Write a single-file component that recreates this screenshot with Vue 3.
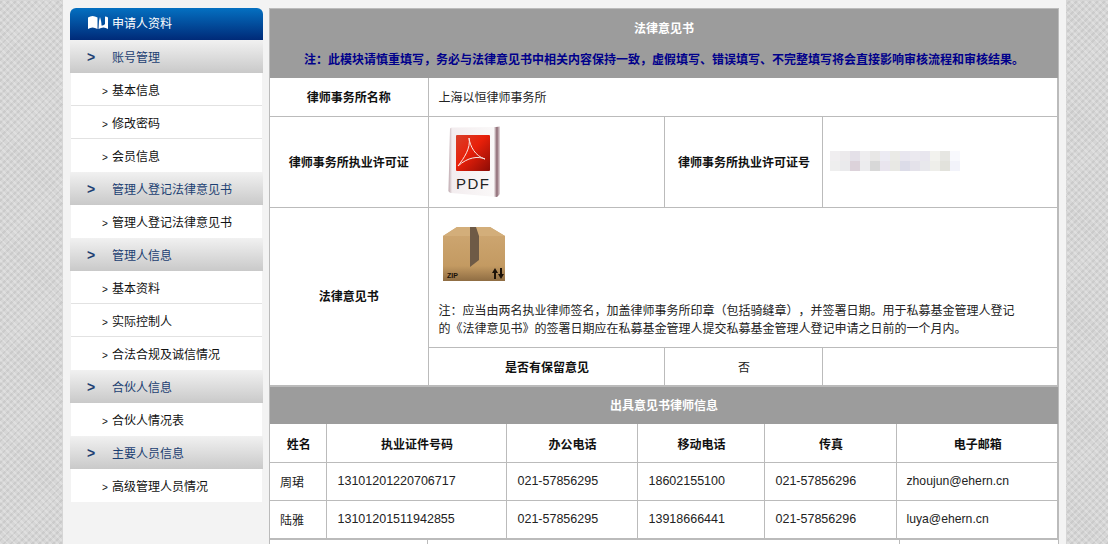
<template>
  <div class="page">
    <div class="wrap">
      <aside class="side">
        <div class="side-head">
          <svg class="book" width="20" height="13" viewBox="0 0 20 13">
            <path d="M0 1.500 C3 -0.500 6 -0.500 9.500 1.500 V13 C6 11 3 11 0 13 Z" fill="#fff" />
            <path d="M11 5 L12 1 C13 4 13.500 7 13.500 9.500 C15 9.500 16 9 17 8 L17 0.500 C18 0.500 19 1 20 1.500 V13 C17 11 14 11 10.500 13 Z" fill="#fff" />
          </svg>
          <span>申请人资料</span>
        </div>
        <template v-for="group in menu" :key="group.title">
          <div class="side-group"><b>&gt;</b><span>{{ group.title }}</span></div>
          <ul class="side-list">
            <li v-for="item in group.items" :key="item"><small>&gt;</small>{{ item }}</li>
          </ul>
        </template>
      </aside>

      <main class="main">
        <div class="head-box">
          <div class="head-title">法律意见书</div>
          <div class="head-note">注：此模块请慎重填写，务必与法律意见书中相关内容保持一致，虚假填写、错误填写、不完整填写将会直接影响审核流程和审核结果。</div>
        </div>
        <table class="info">
          <colgroup>
            <col style="width: 158px" />
            <col style="width: 236px" />
            <col style="width: 158px" />
            <col />
          </colgroup>
          <tbody>
            <tr class="r38">
              <th>律师事务所名称</th>
              <td colspan="3" class="pad">上海以恒律师事务所</td>
            </tr>
            <tr class="r91">
              <th>律师事务所执业许可证</th>
              <td class="pdf-cell">
                <svg width="54" height="72" viewBox="0 0 54 72">
                  <defs>
                    <linearGradient id="pdfRed" x1="0" y1="0" x2="1" y2="1">
                      <stop offset="0" stop-color="#d8402a" />
                      <stop offset="0.45" stop-color="#e8200a" />
                      <stop offset="1" stop-color="#8c0c06" />
                    </linearGradient>
                    <linearGradient id="pdfPage" x1="0" y1="0" x2="1" y2="0">
                      <stop offset="0" stop-color="#b9a3a9" />
                      <stop offset="0.07" stop-color="#f3edef" />
                      <stop offset="0.88" stop-color="#faf8f8" />
                      <stop offset="0.94" stop-color="#8a6670" />
                      <stop offset="1" stop-color="#e8dcdf" />
                    </linearGradient>
                  </defs>
                  <path d="M2 3 Q2 1.500 4 1.500 L48 1 L52 0.500 V68 L49 71 L3 67 Q0 66 0.500 64 Z" fill="url(#pdfPage)" />
                  <rect x="8" y="9" width="34" height="36" rx="1" fill="url(#pdfRed)" />
                  <path d="M21 12 C22 20 27 30 37 33 C30 30 20 31 10 40 C16 32 23 22 21 12 Z" fill="none" stroke="#f8e8e4" stroke-width="1" />
                  <text x="8" y="63" class="pdf-text">PDF</text>
                </svg>
              </td>
              <th class="shift">律师事务所执业许可证号</th>
              <td class="pad">
                <div class="blur">
                  <i v-for="(c, i) in blurCells" :key="i" :style="{ background: c }"></i>
                </div>
              </td>
            </tr>
            <tr class="r140">
              <th rowspan="2" class="lift">法律意见书</th>
              <td colspan="3" class="note-cell">
                <svg class="zip" width="64" height="55" viewBox="0 0 64 55">
                  <defs>
                    <linearGradient id="boxBody" x1="0" y1="0" x2="0" y2="1">
                      <stop offset="0" stop-color="#cfa873" />
                      <stop offset="0.72" stop-color="#c39a62" />
                      <stop offset="1" stop-color="#8f6d43" />
                    </linearGradient>
                  </defs>
                  <path d="M0 9 L14 0 H47 L62 9 V54 H0 Z" fill="url(#boxBody)" />
                  <path d="M0 9 L14 0 H47 L62 9 Z" fill="#d3ae7a" />
                  <path d="M27 0 H33 L36 9 V33 L27 40 Z" fill="#6e5a46" />
                  <text x="4" y="51" class="zip-text">ZIP</text>
                  <path d="M52 41 L55 46 H53 V52 H51 V46 H49 Z M58 52 L55 47 H57 V41 H59 V47 H61 Z" fill="#1c1208" />
                </svg>
                <p>注：应当由两名执业律师签名，加盖律师事务所印章（包括骑缝章），并签署日期。用于私募基金管理人登记的《法律意见书》的签署日期应在私募基金管理人提交私募基金管理人登记申请之日前的一个月内。</p>
              </td>
            </tr>
            <tr class="r38">
              <th class="shift">是否有保留意见</th>
              <td class="center shift">否</td>
              <td></td>
            </tr>
          </tbody>
        </table>
        <div class="sub-title">出具意见书律师信息</div>
        <table class="lawyers">
          <colgroup>
            <col style="width: 56px" />
            <col style="width: 180px" />
            <col style="width: 131px" />
            <col style="width: 127px" />
            <col style="width: 132px" />
            <col />
          </colgroup>
          <thead>
            <tr class="r38">
              <th class="shift">姓名</th>
              <th class="shift">执业证件号码</th>
              <th class="shift">办公电话</th>
              <th class="shift">移动电话</th>
              <th class="shift">传真</th>
              <th class="shift">电子邮箱</th>
            </tr>
          </thead>
          <tbody>
            <tr v-for="p in lawyers" :key="p.name" class="r38">
              <td class="pad">{{ p.name }}</td>
              <td class="pad num">{{ p.id }}</td>
              <td class="pad num">{{ p.office }}</td>
              <td class="pad num">{{ p.mobile }}</td>
              <td class="pad num">{{ p.fax }}</td>
              <td class="pad mail">{{ p.email }}</td>
            </tr>
          </tbody>
        </table>
        <div class="tail"><i></i><i></i></div>
      </main>
    </div>
  </div>
</template>

<script setup>
const menu = [
  { title: "账号管理", items: ["基本信息", "修改密码", "会员信息"] },
  { title: "管理人登记法律意见书", items: ["管理人登记法律意见书"] },
  { title: "管理人信息", items: ["基本资料", "实际控制人", "合法合规及诚信情况"] },
  { title: "合伙人信息", items: ["合伙人情况表"] },
  { title: "主要人员信息", items: ["高级管理人员情况"] },
]

const lawyers = [
  { name: "周珺", id: "13101201220706717", office: "021-57856295", mobile: "18602155100", fax: "021-57856296", email: "zhoujun@ehern.cn" },
  { name: "陆雅", id: "13101201511942855", office: "021-57856295", mobile: "13918666441", fax: "021-57856296", email: "luya@ehern.cn" },
]

const blurCells = [
  "#f0eef0", "#eceaec", "#e4e0e8", "#eeedef", "#e8e7e6", "#ecebf3", "#eaeae6", "#e8e6ef", "#ebe9ef", "#e8e6ee", "#f2f2ee", "#e6e6e2", "#f8f9fd",
  "#eeeeee", "#eaeaec", "#dcd2da", "#ececee", "#d8d8d8", "#e9e5ee", "#e8e8e4", "#dcdce8", "#e4e2ea", "#e8e8ec", "#eeeeea", "#e2e2dc", "#f2f3fa",
]
</script>

<style>
body {
  background-color: #d6d6d6;
  background-image:
    repeating-linear-gradient(45deg, rgba(255, 255, 255, 0.22) 0 2px, transparent 2px 5px),
    repeating-linear-gradient(-45deg, rgba(120, 120, 120, 0.12) 0 2px, transparent 2px 5px);
  overflow: hidden;
}
</style>

<style scoped>
.page {
  width: 1108px;
  height: 544px;
  overflow: hidden;
  font-family: "Liberation Sans", "Noto Sans CJK SC", sans-serif;
  font-size: 12px;
  color: #222;
}
.wrap {
  width: 1003px;
  height: 544px;
  margin-left: 63px;
  padding: 8px 7px 0;
  box-sizing: border-box;
  background: #f3f3f3;
  display: flex;
  gap: 6px;
}
.side {
  width: 193px;
  flex: none;
}
.side-head {
  height: 32px;
  padding: 0 0 4px 18px;
  box-sizing: border-box;
  border-radius: 6px 6px 0 0;
  background: linear-gradient(#0470c1, #002a78);
  color: #fff;
  display: flex;
  align-items: center;
  gap: 4px;
}
.side-group {
  height: 33px;
  background: linear-gradient(#f1f1f1, #c9c9c9);
  color: #1c3f72;
  display: flex;
  align-items: center;
}
.side-group b {
  width: 42px;
  padding-left: 17px;
  box-sizing: border-box;
  font-size: 14px;
}
.side-list {
  list-style: none;
  margin: 0 1px;
  padding: 0;
  background: #fff;
}
.side-list li {
  height: 33px;
  line-height: 36px;
  padding-left: 31px;
  color: #111;
  border-bottom: 1px solid #e2e2e2;
  box-sizing: border-box;
}
.side-list li:last-child {
  border-bottom: 0;
}
.side-list small {
  display: inline-block;
  width: 10px;
  font-size: 10px;
}
.main {
  width: 790px;
  flex: none;
  background: #fff;
  border: 1px solid #bbb;
  border-bottom: 0;
  box-sizing: border-box;
}
.head-box {
  height: 69px;
  background: #9c9c9c;
  text-align: center;
  font-weight: bold;
}
.head-title {
  color: #fff;
  padding-top: 11px;
  line-height: 18px;
}
.head-note {
  color: #00008b;
  margin-top: 13px;
  line-height: 18px;
}
table {
  width: 788px;
  table-layout: fixed;
  border-collapse: collapse;
}
th,
td {
  border: 1px solid #bbb;
  padding: 0;
  font-size: 12px;
}
tr > :first-child {
  border-left: 0;
}
th {
  color: #111;
  text-align: center;
}
.r38 {
  height: 38px;
}
.r91 {
  height: 91px;
}
.r140 {
  height: 140px;
}
.info tr:first-child > * {
  border-top: 0;
}
.pad {
  padding-left: 10px;
}
.shift {
  padding-left: 2px;
}
.lift {
  padding-bottom: 2px;
}
.center {
  text-align: center;
}
.pdf-cell {
  padding-left: 19px;
}
.pdf-cell svg,
.zip {
  display: block;
}
.pdf-text {
  font-size: 15px;
  letter-spacing: 1.5px;
  fill: #222;
}
.zip-text {
  font-size: 7px;
  font-weight: bold;
  fill: #1c1208;
}
.blur {
  width: 130px;
  margin: -1px 0 0 -3px;
  display: grid;
  grid-template-columns: repeat(13, 10px);
  grid-auto-rows: 10px;
  filter: blur(0.7px);
}
.note-cell {
  padding: 19px 40px 0 10px;
  vertical-align: top;
}
.note-cell .zip {
  margin: 0 0 20px 4px;
}
.note-cell p {
  margin: 0;
  line-height: 18px;
  text-spacing-trim: space-all;
}
.sub-title {
  height: 37px;
  line-height: 39px;
  background: #9c9c9c;
  color: #fff;
  font-weight: bold;
  text-align: center;
  border-top: 1px solid #bbb;
}
.lawyers thead th {
  border-top: 1px solid #fff;
}
.num {
  padding-left: 11px;
  font-size: 12.5px;
}
.mail {
  font-size: 12.2px;
}
.tail {
  height: 6px;
  border-top: 1px solid #bbb;
  display: grid;
  grid-template-columns: 158px 472px 1fr;
}
.tail i {
  border-right: 1px solid #bbb;
}
</style>
